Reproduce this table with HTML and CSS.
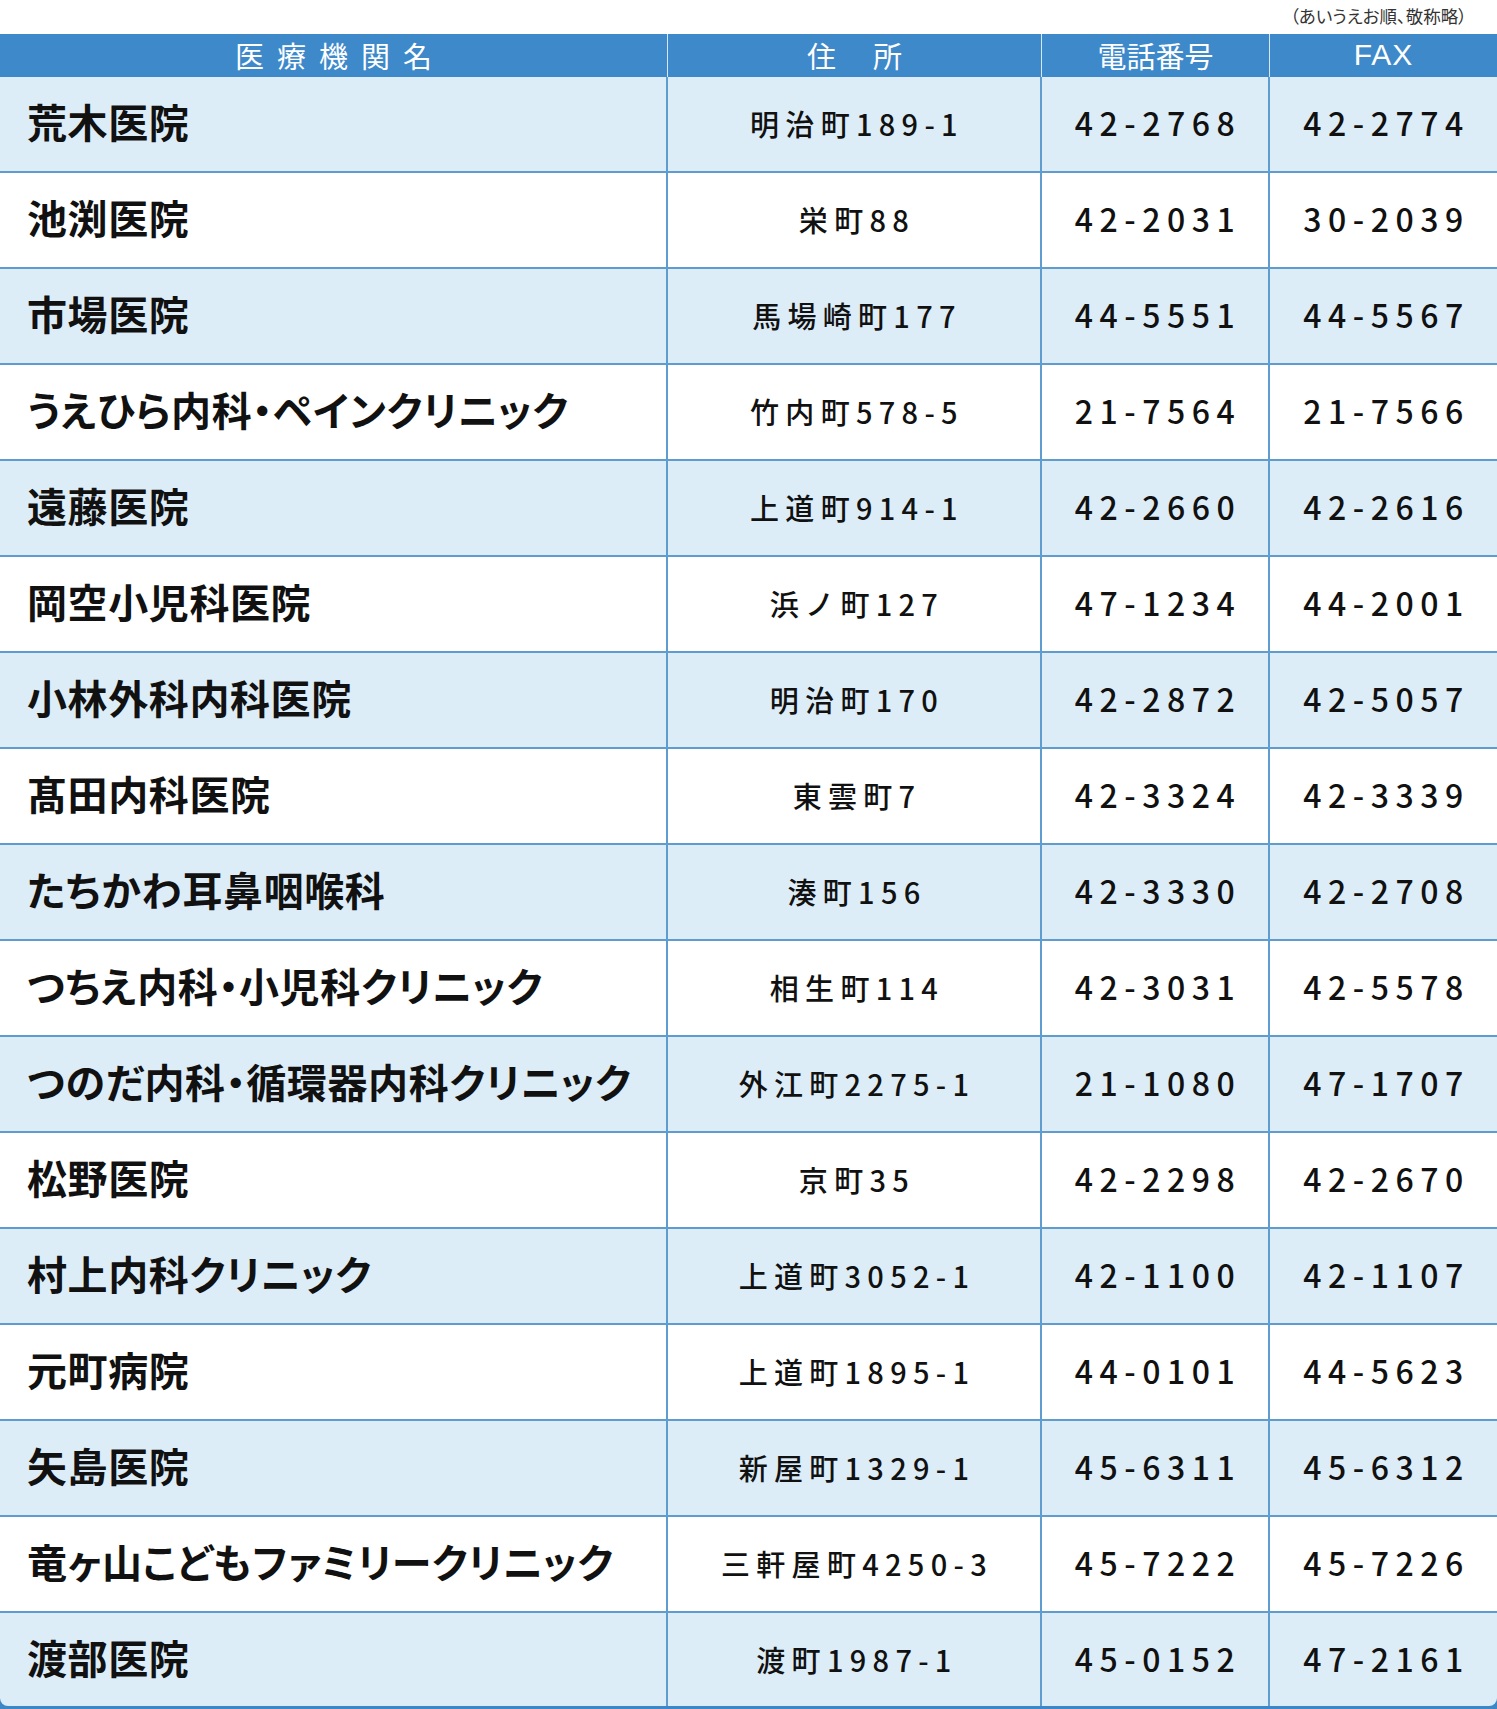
FILE: index.html
```html
<!DOCTYPE html>
<html lang="ja">
<head>
<meta charset="utf-8">
<title>医療機関一覧</title>
<link rel="stylesheet" href="styles.css">
</head>
<body>
<div class="note">（あいうえお順、敬称略）</div>
<div class="table">
  <div class="row head">
    <div class="cell c-name"><span class="h-name">医療機関名</span></div>
    <div class="cell c-addr"><span class="h-addr">住　所</span></div>
    <div class="cell c-tel"><span class="h-tel">電話番号</span></div>
    <div class="cell c-fax"><span class="h-fax">FAX</span></div>
  </div>
  <div class="row odd"><div class="cell c-name">荒木医院</div><div class="cell c-addr">明治町189-1</div><div class="cell c-tel">42-2768</div><div class="cell c-fax">42-2774</div></div>
  <div class="row even"><div class="cell c-name">池渕医院</div><div class="cell c-addr">栄町88</div><div class="cell c-tel">42-2031</div><div class="cell c-fax">30-2039</div></div>
  <div class="row odd"><div class="cell c-name">市場医院</div><div class="cell c-addr">馬場崎町177</div><div class="cell c-tel">44-5551</div><div class="cell c-fax">44-5567</div></div>
  <div class="row even"><div class="cell c-name">うえひら内科・ペインクリニック</div><div class="cell c-addr">竹内町578-5</div><div class="cell c-tel">21-7564</div><div class="cell c-fax">21-7566</div></div>
  <div class="row odd"><div class="cell c-name">遠藤医院</div><div class="cell c-addr">上道町914-1</div><div class="cell c-tel">42-2660</div><div class="cell c-fax">42-2616</div></div>
  <div class="row even"><div class="cell c-name">岡空小児科医院</div><div class="cell c-addr">浜ノ町127</div><div class="cell c-tel">47-1234</div><div class="cell c-fax">44-2001</div></div>
  <div class="row odd"><div class="cell c-name">小林外科内科医院</div><div class="cell c-addr">明治町170</div><div class="cell c-tel">42-2872</div><div class="cell c-fax">42-5057</div></div>
  <div class="row even"><div class="cell c-name">髙田内科医院</div><div class="cell c-addr">東雲町7</div><div class="cell c-tel">42-3324</div><div class="cell c-fax">42-3339</div></div>
  <div class="row odd"><div class="cell c-name">たちかわ耳鼻咽喉科</div><div class="cell c-addr">湊町156</div><div class="cell c-tel">42-3330</div><div class="cell c-fax">42-2708</div></div>
  <div class="row even"><div class="cell c-name">つちえ内科・小児科クリニック</div><div class="cell c-addr">相生町114</div><div class="cell c-tel">42-3031</div><div class="cell c-fax">42-5578</div></div>
  <div class="row odd"><div class="cell c-name">つのだ内科・循環器内科クリニック</div><div class="cell c-addr">外江町2275-1</div><div class="cell c-tel">21-1080</div><div class="cell c-fax">47-1707</div></div>
  <div class="row even"><div class="cell c-name">松野医院</div><div class="cell c-addr">京町35</div><div class="cell c-tel">42-2298</div><div class="cell c-fax">42-2670</div></div>
  <div class="row odd"><div class="cell c-name">村上内科クリニック</div><div class="cell c-addr">上道町3052-1</div><div class="cell c-tel">42-1100</div><div class="cell c-fax">42-1107</div></div>
  <div class="row even"><div class="cell c-name">元町病院</div><div class="cell c-addr">上道町1895-1</div><div class="cell c-tel">44-0101</div><div class="cell c-fax">44-5623</div></div>
  <div class="row odd"><div class="cell c-name">矢島医院</div><div class="cell c-addr">新屋町1329-1</div><div class="cell c-tel">45-6311</div><div class="cell c-fax">45-6312</div></div>
  <div class="row even"><div class="cell c-name">竜ヶ山こどもファミリークリニック</div><div class="cell c-addr">三軒屋町4250-3</div><div class="cell c-tel">45-7222</div><div class="cell c-fax">45-7226</div></div>
  <div class="row odd last"><div class="cell c-name">渡部医院</div><div class="cell c-addr">渡町1987-1</div><div class="cell c-tel">45-0152</div><div class="cell c-fax">47-2161</div></div>
</div>
</body>
</html>
```
FILE: styles.css
```css
html, body {
  margin: 0;
  padding: 0;
  background: #ffffff;
}
body {
  width: 1497px;
  font-family: "Noto Sans CJK JP", "Noto Sans", sans-serif;
  color: #111;
}
.note {
  height: 34px;
  line-height: 31px;
  text-align: right;
  padding-right: 30px;
  font-size: 17.5px;
  color: #333;
  font-feature-settings: "palt";
}
.table {
  background: #3d87c6;
  padding-bottom: 3px;
}
.row {
  display: grid;
  grid-template-columns: 668px 374px 228px 227px;
  height: 94px;
  border-bottom: 2px solid #5f9dd1;
}
.row.head {
  height: 43px;
  border-bottom: 0;
  background: #3d89ca;
  color: #fff;
}
.row.odd { background: #ddedf8; }
.row.even { background: #ffffff; }
.row.last {
  border-bottom: 0;
  height: 93px;
  border-radius: 0 0 8px 8px;
}
.cell {
  display: flex;
  align-items: center;
  justify-content: center;
  border-right: 2px solid #5f9dd1;
  box-sizing: border-box;
}
.cell.c-fax { border-right: 0; }
.c-name {
  justify-content: flex-start;
  padding-left: 27px;
  font-weight: 700;
  font-size: 40px;
  font-feature-settings: "palt";
  padding-bottom: 6px;
  letter-spacing: 0.6px;
}
.c-addr {
  font-size: 29px;
  font-weight: 500;
  letter-spacing: 6.3px;
  padding-left: 6px;
  padding-bottom: 2px;
}
.c-tel, .c-fax {
  font-size: 32px;
  font-weight: 500;
  letter-spacing: 6.5px;
  padding-left: 6px;
  padding-bottom: 4px;
}
.head .cell {
  font-weight: 400;
  padding: 0 0 3px 0;
  justify-content: center;
  letter-spacing: 0;
  border-right: 1.5px solid #d6e8f6;
}
.head .cell.c-fax { border-right: 0; }
.h-name {
  font-size: 29px;
  letter-spacing: 13px;
  margin-right: -13px;
}
.h-addr {
  font-size: 29px;
  letter-spacing: 4px;
  margin-right: -4px;
}
.h-tel {
  font-size: 29px;
  letter-spacing: 0;
}
.h-fax {
  font-family: "Liberation Sans", Arial, sans-serif;
  font-size: 30px;
  letter-spacing: 1px;
}
```
